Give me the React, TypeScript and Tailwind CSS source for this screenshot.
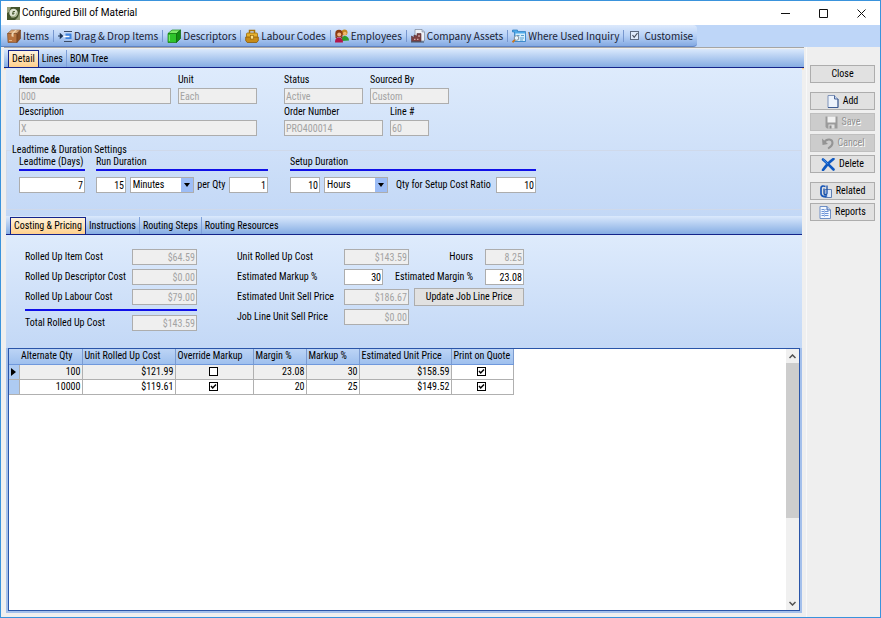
import { useState, type ReactNode } from "react";
import clsx from "clsx";

type Row = {
  qty: string;
  cost: string;
  override: boolean;
  margin: string;
  markup: string;
  price: string;
  print: boolean;
};

const initialRows: Row[] = [
  { qty: "100", cost: "$121.99", override: false, margin: "23.08", markup: "30", price: "$158.59", print: true },
  { qty: "10000", cost: "$119.61", override: true, margin: "20", markup: "25", price: "$149.52", print: true },
];

/* ---------- icons ---------- */

const AppIcon = () => (
  <svg viewBox="0 0 13 13" className="size-[13px] shrink-0">
    <rect width="13" height="13" fill="#44542c" />
    <path d="M0 0h4L2 5 0 6zM13 4v9H8l3-3z" fill="#98a27c" />
    <circle cx="6.5" cy="6" r="4.2" fill="#dfe4d2" />
    <path d="M4 9.500c4 1 6-1 6-4" fill="none" stroke="#a9b48e" strokeWidth="1.500" />
    <path d="M6 8V4.500h2M5 6.300h2.500" stroke="#4e5f36" fill="none" />
  </svg>
);

const BoxIcon = () => (
  <svg viewBox="0 0 14 14" className="size-[14px] shrink-0">
    <path d="M.5 4.500 4.500 1h9L10 4.500z" fill="#dba878" stroke="#8a5730" strokeWidth=".6" />
    <path d="M.5 4.500H10V13.500H1z" fill="#b8733f" stroke="#7c4822" strokeWidth=".6" />
    <path d="m10 4.500 3.500-3.500v8.500L10 13.500z" fill="#8b4f26" stroke="#6c3c1b" strokeWidth=".6" />
    <path d="M4.500 4.500 8.300 1h1.700L6.500 4.500V8l-2-.8z" fill="#f0d3ae" />
    <path d="M2 11.500h3" stroke="#e3b88b" />
  </svg>
);

const DragIcon = () => (
  <svg viewBox="0 0 14 14" className="size-[14px] shrink-0">
    <path d="M0 7h4M2.300 5 4.500 7 2.300 9z" stroke="#1d3557" fill="#1d3557" strokeWidth="1.100" />
    <path d="M6 2.500h8M6 12.500h8" stroke="#3c4c66" />
    <rect x="7.500" y="4.500" width="6" height="5.500" fill="#3f83de" />
    <path d="M5.500 7.500h6" stroke="#fff" strokeWidth="1.400" />
  </svg>
);

const CubeIcon = () => (
  <svg viewBox="0 0 14 14" className="size-[14px] shrink-0">
    <path d="m1 4.500 4-3.500h8.500L9.500 4.500z" fill="#7fe86b" stroke="#188a16" strokeWidth=".7" />
    <path d="M1 4.500h8.500v9H1z" fill="#2fc42b" stroke="#12780f" strokeWidth=".7" />
    <path d="m9.500 4.500 4-3.500v8.500l-4 4z" fill="#128f12" stroke="#0b650b" strokeWidth=".7" />
    <path d="M2.300 6v6" stroke="#8bf07d" />
  </svg>
);

const CaseIcon = () => (
  <svg viewBox="0 0 14 14" className="size-[14px] shrink-0">
    <path d="M4.500 4.500V1.500h5v3" fill="none" stroke="#a8720a" strokeWidth="1.500" />
    <rect x="1.500" y="4" width="11" height="4.500" rx="1" fill="#e5b02e" stroke="#9b6a0c" strokeWidth=".8" />
    <path d="M.7 8h12.600v3.500l-1.500 2H2.200L.7 11.500z" fill="#c88b17" stroke="#8a5a08" strokeWidth=".8" />
    <rect x="5.500" y="6.500" width="3" height="3.500" fill="#ffe28a" stroke="#8a5a08" strokeWidth=".6" />
  </svg>
);

const PeopleIcon = () => (
  <svg viewBox="0 0 14 14" className="size-[14px] shrink-0">
    <circle cx="9.500" cy="3.500" r="3" fill="#c58a25" />
    <circle cx="9.800" cy="4.500" r="1.800" fill="#f0b76b" />
    <path d="M6.500 12c0-4 1.500-5 3.500-5s4 1.500 4 4.500z" fill="#2b9d2c" />
    <circle cx="4" cy="4.500" r="3.700" fill="#8c3b12" />
    <path d="M.5 5v4h2zM7.500 5v4h-2z" fill="#8c3b12" />
    <circle cx="4.200" cy="5.500" r="2" fill="#f2b384" />
    <path d="M0 13.500c0-4 1.500-5 4-5s4 1.500 4 5z" fill="#b3154c" />
  </svg>
);

const AssetIcon = () => (
  <svg viewBox="0 0 14 14" className="size-[14px] shrink-0">
    <path d="M4 .5h7L13.500 3v9H4z" fill="#eef1f6" stroke="#8792a4" strokeWidth=".8" />
    <path d="M11 .5V3h2.500" fill="#bcc6d6" stroke="#8792a4" strokeWidth=".6" />
    <path d="M.5 12.500V7l2.500 1.500V6l3 1V4.500h4v8z" fill="#7d4040" stroke="#56333b" strokeWidth=".6" />
    <path d="M3 10.300h1.500m1.500 0h1.500M7 7h2" stroke="#e9c6c6" />
    <path d="M0 13h13" stroke="#434c5c" />
  </svg>
);

const InquiryIcon = () => (
  <svg viewBox="0 0 14 14" className="size-[14px] shrink-0">
    <path d="M.5 3V1h5v1.500h8v10H2.500V3z" fill="#4fabea" stroke="#2878bd" strokeWidth=".7" />
    <rect x="3.500" y="4.500" width="9.500" height="7.500" fill="#d5eefc" />
    <path d="M5 6.500h2.500M9 6.500h3M8 9h4M8 11h3" stroke="#5b9fd0" />
    <circle cx="4.500" cy="9" r="2.300" fill="#e9f7ff" stroke="#82909e" />
    <path d="m2.800 10.800-2.300 2.500" stroke="#c9741c" strokeWidth="1.700" />
  </svg>
);

const CustomiseIcon = () => (
  <svg viewBox="0 0 14 14" className="size-[14px] shrink-0">
    <rect x="2.500" y="2.500" width="8" height="8" fill="#dfeafb" stroke="#5d6a80" />
    <path d="m4.500 6 1.700 2.300L9.500 4" fill="none" stroke="#454d5c" strokeWidth="1.200" />
  </svg>
);

const PageIcon = () => (
  <svg viewBox="0 0 12 13" className="h-[13px] w-3 shrink-0">
    <path d="M1 .5h6.500L11 4v8.500H1z" fill="#edf3fc" stroke="#7f93b8" />
    <path d="M7.500.5V4H11" fill="#c6d5ee" stroke="#4c6798" />
    <path d="M11 4v8.500H1" fill="none" stroke="#3e5c92" />
  </svg>
);

const SaveIcon = () => (
  <svg viewBox="0 0 13 13" className="size-[13px] shrink-0">
    <path d="M.5.5h12v12H2L.5 11z" fill="#9b9b9b" />
    <path d="M2.500.5h8v6h-8z" fill="#f1f1f1" />
    <path d="M3.500 8.500h6v4h-6z" fill="#dedede" />
    <path d="M4.500 9.500h2v3h-2z" fill="#8b8b8b" />
  </svg>
);

const UndoIcon = () => (
  <svg viewBox="0 0 13 13" className="size-[13px] shrink-0">
    <path d="M3 5.500C6 1 11.500 2 11.500 6c0 3-2 4-4.500 5.500" fill="none" stroke="#949494" strokeWidth="2" />
    <path d="M1 1.500 1.500 8l5.500-1z" fill="#949494" />
  </svg>
);

const DeleteIcon = () => (
  <svg viewBox="0 0 14 13" className="h-[13px] w-[14px] shrink-0">
    <path d="M2 1.500c3 2.500 6 5.500 10.500 10M12.500 1C8 4 5 7.500 2 12" fill="none" stroke="#0e58c0" strokeWidth="2.600" strokeLinecap="round" />
    <path d="m2.500 1.800 4 3.700" stroke="#4b95ee" strokeLinecap="round" />
  </svg>
);

const RelatedIcon = () => (
  <svg viewBox="0 0 12 13" className="h-[13px] w-3 shrink-0">
    <path d="M5 4.500h6.500v8H5z" fill="#dfe9f8" stroke="#5f7fb4" />
    <path d="M7 .5v8c0 1.500-3 1.500-3 0V3.500" fill="none" stroke="#164fa8" strokeWidth="1.300" />
    <path d="M5.500 1.500C3 .5 1 1 1 3v5.500c0 3 4 4 6 2" fill="none" stroke="#1857b8" strokeWidth="1.700" />
  </svg>
);

const ReportIcon = () => (
  <svg viewBox="0 0 12 13" className="h-[13px] w-3 shrink-0">
    <path d="M1 .5h7L11.500 4v8.500H1z" fill="#f3f8ff" stroke="#6e8fc6" />
    <path d="M8 .5V4h3.500" fill="#bcd0f0" stroke="#426bb0" />
    <path d="M2.500 3.500h4M2.500 5.500h7M2.500 7.500h7M2.500 9.500h7" stroke="#6d94d6" />
    <path d="M5.500 3v8" stroke="#a9c2ea" />
  </svg>
);

/* ---------- controls ---------- */

type BoxProps = { id: string; value: string; width: string; disabled?: boolean; right?: boolean };

function TextBox({ id, value, width, disabled, right }: BoxProps) {
  return (
    <input
      id={id}
      defaultValue={value}
      disabled={disabled}
      className={clsx(
        "h-4 shrink-0 border border-[#adadad] px-px leading-3 outline-none",
        width,
        right && "text-right",
        disabled ? "bg-[#efefef] text-[#a3a3a3]" : "bg-white text-black",
      )}
    />
  );
}

function Field({ label, bold, ...box }: BoxProps & { label: string; bold?: boolean }) {
  return (
    <div className="flex flex-col">
      <label htmlFor={box.id} className={clsx("h-4 leading-4 whitespace-nowrap", bold && "font-bold")}>
        {label}
      </label>
      <TextBox {...box} />
    </div>
  );
}

function CostField({ label, labelWidth, ...box }: BoxProps & { label: string; labelWidth: string }) {
  return (
    <div className="flex items-center">
      <label htmlFor={box.id} className={clsx("shrink-0 whitespace-nowrap", labelWidth)}>
        {label}
      </label>
      <TextBox {...box} right />
    </div>
  );
}

function UnitSelect({ label, value }: { label: string; value: string }) {
  return (
    <div className="relative h-4 w-16">
      <select
        aria-label={label}
        defaultValue={value}
        className="h-4 w-full appearance-none border border-[#adadad] bg-white pl-0.5 leading-3 outline-none"
      >
        <option>Minutes</option>
        <option>Hours</option>
        <option>Days</option>
      </select>
      <span className="pointer-events-none absolute inset-y-px right-px flex w-3 items-center justify-center bg-[#9dbdf6]">
        <svg viewBox="0 0 6 4" className="h-1 w-1.5">
          <path d="M0 0h6L3 4z" fill="#000" />
        </svg>
      </span>
    </div>
  );
}

function Tabs({ items, selected, onSelect }: { items: string[]; selected: string; onSelect: (t: string) => void }) {
  return (
    <div
      role="tablist"
      className="flex h-[19px] items-end border-b border-[#14248a] bg-linear-to-b from-[#dbe9fc] to-[#86ade3] pl-1 shadow-[0_1px_0_#ffcf91,0_2px_0_#ffe6c4]"
    >
      {items.map((item, i) => (
        <button
          key={item}
          role="tab"
          aria-selected={item === selected}
          onClick={() => onSelect(item)}
          className={clsx(
            "h-[17px] px-[3px] whitespace-nowrap",
            item === selected
              ? "border border-b-0 border-[#14248a] bg-linear-to-b from-[#fff3dc] to-[#ffd08c]"
              : i < items.length - 1 && "border-r border-[#7d9fd8]",
          )}
        >
          {item}
        </button>
      ))}
    </div>
  );
}

function Check({ label, checked, onChange }: { label: string; checked: boolean; onChange: () => void }) {
  return (
    <span className="relative mx-auto block size-[9px]">
      <input
        type="checkbox"
        aria-label={label}
        checked={checked}
        onChange={onChange}
        className="peer block size-[9px] appearance-none border border-black bg-white"
      />
      <svg viewBox="0 0 9 9" className="pointer-events-none absolute inset-0 hidden size-[9px] peer-checked:block">
        <path d="m2 4 1.700 2L7 2.500" fill="none" stroke="#000" strokeWidth="1.500" />
      </svg>
    </span>
  );
}

function SideButton({ icon, disabled, children }: { icon?: ReactNode; disabled?: boolean; children: ReactNode }) {
  return (
    <button
      disabled={disabled}
      className={clsx(
        "flex h-[18px] w-full items-center justify-center gap-1 border",
        disabled
          ? "border-[#bfbfbf] bg-[#cccccc] text-[#929292] [text-shadow:1px_1px_0_#fff]"
          : "border-[#adadad] bg-[#e1e1e1] text-black",
      )}
    >
      {icon}
      {children}
    </button>
  );
}

const tools = [
  { label: "Items", icon: <BoxIcon /> },
  { label: "Drag & Drop Items", icon: <DragIcon /> },
  { label: "Descriptors", icon: <CubeIcon /> },
  { label: "Labour Codes", icon: <CaseIcon /> },
  { label: "Employees", icon: <PeopleIcon /> },
  { label: "Company Assets", icon: <AssetIcon /> },
  { label: "Where Used Inquiry", icon: <InquiryIcon /> },
  { label: "Customise", icon: <CustomiseIcon /> },
];

const columns = [
  { label: "Alternate Qty", width: "w-[63px]" },
  { label: "Unit Rolled Up Cost", width: "w-[93px]" },
  { label: "Override Markup", width: "w-[78px]" },
  { label: "Margin %", width: "w-[53px]" },
  { label: "Markup %", width: "w-[53px]" },
  { label: "Estimated Unit Price", width: "w-[92px]" },
  { label: "Print on Quote", width: "w-[62px]" },
];

export default function App() {
  const [tab, setTab] = useState("Detail");
  const [subTab, setSubTab] = useState("Costing & Pricing");
  const [rows, setRows] = useState(initialRows);

  const toggle = (index: number, key: "override" | "print") =>
    setRows(rows.map((row, i) => (i === index ? { ...row, [key]: !row[key] } : row)));

  return (
    <div className="flex min-h-screen flex-col border border-[#3a93dc] bg-[#efefef] font-['Roboto_Condensed',Roboto,sans-serif] text-[10px] leading-3 text-black">
      <header className="flex h-6 items-center bg-white pl-1.5">
        <AppIcon />
        <h1 className="ml-0.5 flex-1 font-[Roboto,sans-serif]">Configured Bill of Material</h1>
        <div className="flex">
          <button aria-label="Minimise" className="flex h-6 w-[38px] items-center justify-center">
            <svg viewBox="0 0 9 9" className="size-[9px]"><path d="M0 4.500h9" stroke="#111" /></svg>
          </button>
          <button aria-label="Maximise" className="flex h-6 w-[38px] items-center justify-center">
            <svg viewBox="0 0 9 9" className="size-[9px]"><path d="M.5.5h8v8h-8z" fill="none" stroke="#111" /></svg>
          </button>
          <button aria-label="Close window" className="flex h-6 w-[38px] items-center justify-center">
            <svg viewBox="0 0 9 9" className="size-[9px]"><path d="m.5.5 8 8m0-8-8 8" stroke="#111" /></svg>
          </button>
        </div>
      </header>

      <nav className="flex h-[22px] bg-[#bed6f8]">
        <div className="flex items-center rounded-r-sm border-b border-[#5f83c4] bg-linear-to-b from-[#dce9fc] via-[#b9d2f6] to-[#83a9e2] pr-1 pl-1.5 font-['Noto_Sans_CJK_JP',sans-serif] text-[#1a2233]">
          {tools.map((tool, i) => (
            <button
              key={tool.label}
              className={clsx(
                "flex h-3 items-center gap-0.5 leading-3 whitespace-nowrap",
                i > 0 && "ml-1 border-l border-[#7797cf] pl-1",
              )}
            >
              {tool.icon}
              {tool.label}
            </button>
          ))}
        </div>
      </nav>

      <div className="flex flex-1">
        <main className="ml-[3px] flex min-w-0 flex-1 flex-col border-t border-[#a5a5a5] pt-px pb-1">
          <Tabs items={["Detail", "Lines", "BOM Tree"]} selected={tab} onSelect={setTab} />

          <div className="mx-0.5 bg-linear-to-b from-[#deebfc] to-[#c3d8f6] pt-1">
            <div className="flex gap-[27px] pl-[13px]">
              <div className="flex w-[238px] flex-col">
                <div className="flex gap-[7px]">
                  <Field id="item-code" label="Item Code" value="000" width="w-[152px]" disabled bold />
                  <Field id="unit" label="Unit" value="Each" width="w-[79px]" disabled />
                </div>
                <Field id="description" label="Description" value="X" width="w-full" disabled />
              </div>
              <div className="flex flex-col">
                <div className="flex gap-[7px]">
                  <Field id="status" label="Status" value="Active" width="w-[79px]" disabled />
                  <Field id="sourced-by" label="Sourced By" value="Custom" width="w-[79px]" disabled />
                </div>
                <div className="flex gap-[7px]">
                  <Field id="order-number" label="Order Number" value="PRO400014" width="w-[99px]" disabled />
                  <Field id="line-number" label="Line #" value="60" width="w-[39px]" disabled />
                </div>
              </div>
            </div>

            <fieldset className="mt-2 mb-1.5 border border-[#cfd9ea] pb-4 pl-3">
              <legend className="-ml-2 px-px">Leadtime &amp; Duration Settings</legend>
              <div className="flex">
                <div className="w-[66px]">
                  <label htmlFor="leadtime" className="block h-[15px] border-b-2 border-[#1010e8] leading-3 whitespace-nowrap">
                    Leadtime (Days)
                  </label>
                  <div className="mt-1.5 flex">
                    <TextBox id="leadtime" value="7" width="w-[66px]" right />
                  </div>
                </div>
                <div className="ml-[11px] w-[172px]">
                  <label htmlFor="run" className="block h-[15px] border-b-2 border-[#1010e8] leading-3">
                    Run Duration
                  </label>
                  <div className="mt-1.5 flex items-center justify-between">
                    <TextBox id="run" value="15" width="w-[30px]" right />
                    <UnitSelect label="Run duration unit" value="Minutes" />
                    <label htmlFor="per-qty">per Qty</label>
                    <TextBox id="per-qty" value="1" width="w-[39px]" right />
                  </div>
                </div>
                <div className="ml-[22px] w-[246px]">
                  <label htmlFor="setup" className="block h-[15px] border-b-2 border-[#1010e8] leading-3">
                    Setup Duration
                  </label>
                  <div className="mt-1.5 flex items-center gap-1">
                    <TextBox id="setup" value="10" width="w-[30px]" right />
                    <UnitSelect label="Setup duration unit" value="Hours" />
                    <label htmlFor="ratio" className="ml-1 flex-1 whitespace-nowrap">
                      Qty for Setup Cost Ratio
                    </label>
                    <TextBox id="ratio" value="10" width="w-[40px]" right />
                  </div>
                </div>
              </div>
            </fieldset>
          </div>

          <div className="mx-0.5 flex flex-1 flex-col">
            <Tabs
              items={["Costing & Pricing", "Instructions", "Routing Steps", "Routing Resources"]}
              selected={subTab}
              onSelect={setSubTab}
            />

            <div className="flex gap-10 bg-linear-to-b from-[#deebfc] to-[#c3d8f6] pt-[14px] pb-[17px] pl-[19px]">
              <div className="w-[172px]">
                <div className="flex flex-col gap-1 border-b-2 border-[#1010e8] pb-1">
                  <CostField id="item-cost" label="Rolled Up Item Cost" labelWidth="w-[107px]" value="$64.59" width="w-[65px]" disabled />
                  <CostField id="descriptor-cost" label="Rolled Up Descriptor Cost" labelWidth="w-[107px]" value="$0.00" width="w-[65px]" disabled />
                  <CostField id="labour-cost" label="Rolled Up Labour Cost" labelWidth="w-[107px]" value="$79.00" width="w-[65px]" disabled />
                </div>
                <div className="mt-1">
                  <CostField id="total-cost" label="Total Rolled Up Cost" labelWidth="w-[107px]" value="$143.59" width="w-[65px]" disabled />
                </div>
              </div>
              <div className="flex w-[287px] flex-col gap-1">
                <div className="flex justify-between">
                  <CostField id="unit-cost" label="Unit Rolled Up Cost" labelWidth="w-[107px]" value="$143.59" width="w-[65px]" disabled />
                  <CostField id="hours" label="Hours" labelWidth="mr-3" value="8.25" width="w-[39px]" disabled />
                </div>
                <div className="flex justify-between">
                  <CostField id="markup" label="Estimated Markup %" labelWidth="w-[107px]" value="30" width="w-[39px]" />
                  <CostField id="margin" label="Estimated Margin %" labelWidth="mr-3" value="23.08" width="w-[39px]" />
                </div>
                <div className="flex h-4 items-center justify-between">
                  <CostField id="sell-price" label="Estimated Unit Sell Price" labelWidth="w-[107px]" value="$186.67" width="w-[65px]" disabled />
                  <button className="h-[18px] w-[110px] border border-[#adadad] bg-[#e1e1e1] whitespace-nowrap">
                    Update Job Line Price
                  </button>
                </div>
                <CostField id="job-price" label="Job Line Unit Sell Price" labelWidth="w-[107px]" value="$0.00" width="w-[65px]" disabled />
              </div>
            </div>

            <div className="flex flex-1 border-x-2 border-b-2 border-[#a3bfeb]">
              <div className="flex flex-1 border border-[#2a55a8] bg-white">
                <div className="flex-1">
                  <table className="table-fixed border-collapse">
                    <thead>
                      <tr className="h-[15px] bg-linear-to-b from-[#bcd4f5] to-[#9fc0ee]">
                        <td className="w-[10px] border-b border-[#6f98dc]" />
                        {columns.map((col) => (
                          <th
                            key={col.label}
                            className={clsx("border-r border-b border-[#6f98dc] border-r-[#7b9bd0] p-0 pl-0.5 text-left font-normal whitespace-nowrap", col.width)}
                          >
                            {col.label}
                          </th>
                        ))}
                      </tr>
                    </thead>
                    <tbody>
                      {rows.map((row, i) => (
                        <tr
                          key={row.qty}
                          className={clsx(
                            "h-[15px] text-right *:border-r *:border-b *:border-[#b0b0b0] *:p-0 *:pr-px",
                            i === 0 ? "bg-[#efefef]" : "bg-white",
                          )}
                        >
                          <td className="bg-[#aecbf2]">
                            {i === 0 && (
                              <svg viewBox="0 0 5 8" className="mx-auto h-2 w-[5px]">
                                <path d="M0 0v8l5-4z" />
                              </svg>
                            )}
                          </td>
                          <td>{row.qty}</td>
                          <td>{row.cost}</td>
                          <td>
                            <Check label={`Override markup for ${row.qty}`} checked={row.override} onChange={() => toggle(i, "override")} />
                          </td>
                          <td>{row.margin}</td>
                          <td>{row.markup}</td>
                          <td>{row.price}</td>
                          <td className="bg-white">
                            <Check label={`Print ${row.qty} on quote`} checked={row.print} onChange={() => toggle(i, "print")} />
                          </td>
                        </tr>
                      ))}
                    </tbody>
                  </table>
                </div>
                <div className="flex w-[13px] flex-col bg-[#f0f0f0]">
                  <button aria-label="Scroll up" className="flex h-[14px] items-center justify-center">
                    <svg viewBox="0 0 7 5" className="h-[5px] w-[7px]"><path d="m.5 4 3-3 3 3" fill="none" stroke="#505050" strokeWidth="1.500" /></svg>
                  </button>
                  <div className="flex-1">
                    <div className="h-2/3 bg-[#cdcdcd]" />
                  </div>
                  <button aria-label="Scroll down" className="flex h-[14px] items-center justify-center">
                    <svg viewBox="0 0 7 5" className="h-[5px] w-[7px]"><path d="m.5 1 3 3 3-3" fill="none" stroke="#505050" strokeWidth="1.500" /></svg>
                  </button>
                </div>
              </div>
            </div>
          </div>
        </main>

        <aside className="ml-0.5 flex w-[74px] shrink-0 flex-col gap-[3px] border-l border-[#f8f8f8] pt-[18px] pr-[5px] pl-[3px]">
          <SideButton>Close</SideButton>
          <div className="mt-1.5 flex flex-col gap-[3px]">
            <SideButton icon={<PageIcon />}>Add</SideButton>
            <SideButton icon={<SaveIcon />} disabled>Save</SideButton>
            <SideButton icon={<UndoIcon />} disabled>Cancel</SideButton>
            <SideButton icon={<DeleteIcon />}>Delete</SideButton>
          </div>
          <div className="mt-1.5 flex flex-col gap-[3px]">
            <SideButton icon={<RelatedIcon />}>Related</SideButton>
            <SideButton icon={<ReportIcon />}>Reports</SideButton>
          </div>
        </aside>
      </div>
    </div>
  );
}
